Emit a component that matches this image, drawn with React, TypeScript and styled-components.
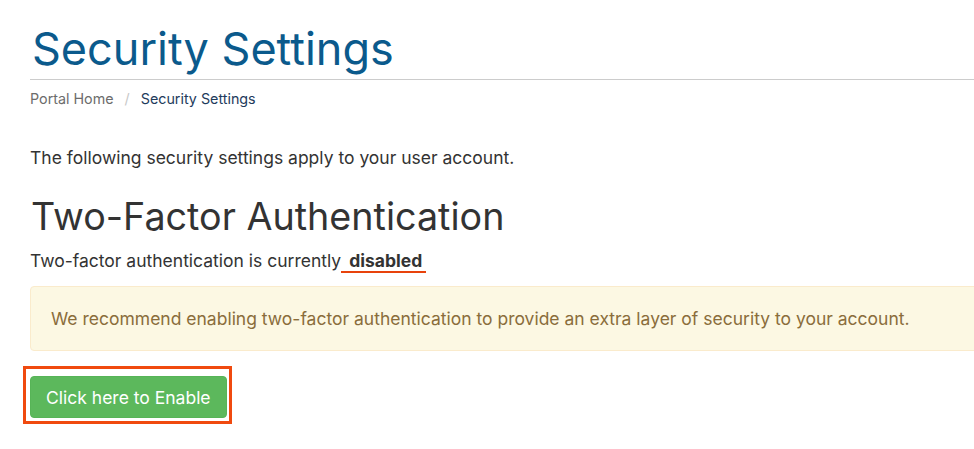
import React from 'react';
import styled, { createGlobalStyle } from 'styled-components';

const GlobalStyle = createGlobalStyle`
  html, body {
    margin: 0;
    padding: 0;
    background: #fff;
    overflow: hidden;
  }
  body {
    font-family: Inter, "Noto Sans", sans-serif;
    color: #333;
  }
`

const Page = styled.div`
  width: 1100px;
  padding-left: 30px;
`

const PageHeader = styled.div`
  padding-top: 22px;
  padding-bottom: 3px;
  border-bottom: 1px solid #cccccc;
`

const Title = styled.h1`
  margin: 0;
  font-size: 45px;
  line-height: 54px;
  font-weight: 400;
  color: #0b5a8c;
  padding-left: 2px;
`

const Breadcrumb = styled.nav`
  display: flex;
  align-items: center;
  margin-top: 9px;
  font-size: 14.3px;
  line-height: 20px;
`

const Crumb = styled.span<{ $active?: boolean }>`
  color: ${p => (p.$active ? '#1e3b5c' : '#6c6c6c')};
`

const Divider = styled.span`
  color: #c8c8c8;
  padding: 0 11px;
`

const Text = styled.p`
  margin: 0;
  font-size: 17.5px;
  line-height: 26px;
  color: #333;
`

const Intro = styled(Text)`
  margin-top: 36px;
`

const SubTitle = styled.h2`
  margin: 23px 0 0;
  font-size: 37.7px;
  line-height: 44px;
  font-weight: 400;
  color: #333;
  padding-left: 1px;
`

const Status = styled(Text)`
  margin-top: 10px;
`

const Marked = styled.span`
  font-weight: 700;
  padding: 0 4px 0 4px;
  border-bottom: 2px solid #e8430c;
`

const Alert = styled.div`
  margin-top: 12px;
  padding: 19px 20px 18px;
  background: #fcf8e3;
  border: 1px solid #faebcc;
  border-radius: 4px;
  color: #8a6d3b;
  font-size: 17.5px;
  line-height: 26px;
`

const Highlight = styled.div`
  display: inline-block;
  margin: 15px 0 0 -7px;
  padding: 7px 2px 3px 4px;
  border: 3px solid #f04a0f;
`

const Button = styled.button`
  display: block;
  height: 42px;
  padding: 0 15px;
  background: #5cb85c;
  border: 1px solid #57b457;
  border-radius: 4px;
  color: #fff;
  font-family: Inter, "Noto Sans", sans-serif;
  font-size: 17.5px;
  cursor: pointer;
`

const App = (): JSX.Element => {
  return (
    <Page>
      <GlobalStyle />
      <PageHeader>
        <Title>Security Settings</Title>
      </PageHeader>
      <Breadcrumb>
        <Crumb>Portal Home</Crumb>
        <Divider>/</Divider>
        <Crumb $active>Security Settings</Crumb>
      </Breadcrumb>
      <Intro>The following security settings apply to your user account.</Intro>
      <SubTitle>Two-Factor Authentication</SubTitle>
      <Status>
        Two-factor authentication is currently<Marked> disabled</Marked>
      </Status>
      <Alert>
        We recommend enabling two-factor authentication to provide an extra layer of security to your account.
      </Alert>
      <Highlight>
        <Button>Click here to Enable</Button>
      </Highlight>
    </Page>
  )
}

export default App;
